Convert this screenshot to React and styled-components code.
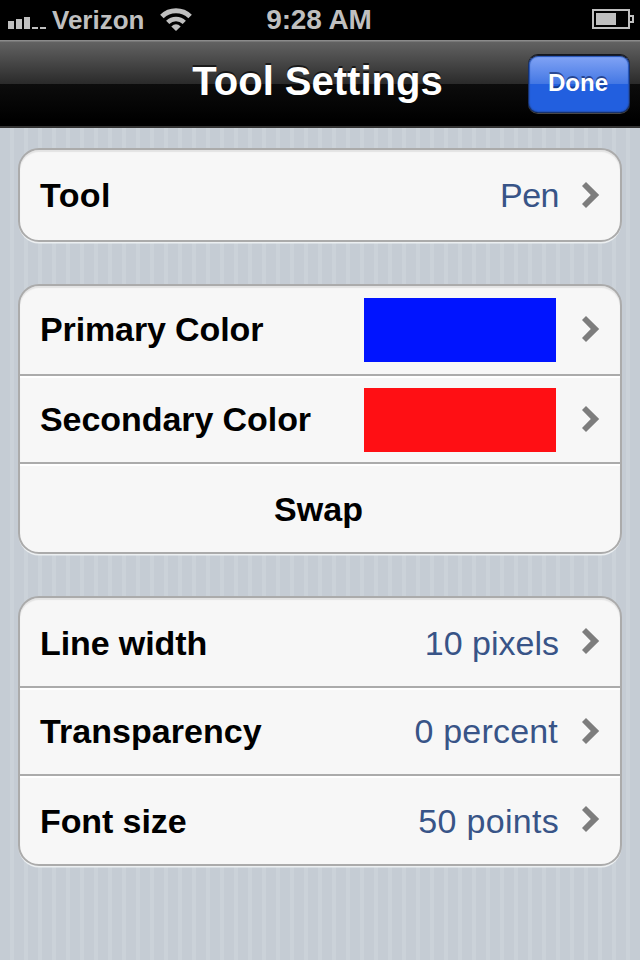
import React from "react";
import styled, { createGlobalStyle } from "styled-components";

const GlobalStyle = createGlobalStyle`
  *, *::before, *::after { box-sizing: border-box; }
  body { margin: 0; background: #c5ccd4; }
`;

const Screen = styled.div`
  width: 640px;
  height: 960px;
  overflow: hidden;
  display: flex;
  flex-direction: column;
  font-family: "Liberation Sans", Helvetica, Arial, sans-serif;
  background: repeating-linear-gradient(
    to right,
    #c5ccd4 0 10px,
    #cbd2d9 10px 14px
  );
`;

const StatusBar = styled.header`
  display: grid;
  grid-template-columns: 1fr auto 1fr;
  align-items: center;
  height: 40px;
  padding: 0 6px 0 8px;
  background: #000;
  color: #bfbfbf;
  font-weight: 700;
  font-size: 26px;
  line-height: 40px;
`;

const Carrier = styled.div`
  display: flex;
  height: 40px;
`;

const CarrierName = styled.span`
  width: 92px;
  margin: 0 16px 0 6px;
`;

const Clock = styled.time`
  height: 40px;
  margin-right: 4px;
  font-size: 28px;
  line-height: 40px;
  letter-spacing: -0.1px;
`;

const BatteryIcon = styled.svg`
  justify-self: end;
`;

const NavBar = styled.nav`
  display: grid;
  grid-template-columns: 102px 1fr 102px;
  align-items: start;
  height: 88px;
  padding: 0 10px;
  border-bottom: 2px solid #333;
  background: linear-gradient(
    #8b8b8b 0 1px,
    #626262 2px,
    #2a2a2a 44px,
    #0c0c0c 44px,
    #000 80px
  );
`;

const Title = styled.h1`
  grid-column: 2;
  margin: 0;
  padding: 1px 5px 0 0;
  text-align: center;
  color: #fff;
  font-size: 40px;
  line-height: 80px;
  white-space: nowrap;
  text-shadow: 0 -2px 0 rgba(0, 0, 0, 0.6);
`;

const DoneButton = styled.button`
  height: 58px;
  margin-top: 15px;
  padding: 0 2px 0 0;
  border: 1px solid #17326f;
  border-top-color: #151c30;
  border-radius: 10px;
  background: linear-gradient(#82a4f5, #4377e4 28px, #225fdf 28px, #225fdf);
  box-shadow: 0 -1px 0 #14161c, 0 1px 0 #484848, inset 0 0 1px 1px #2453b4;
  color: #fff;
  font: 700 24px/54px "Liberation Sans", Helvetica, Arial, sans-serif;
  text-shadow: 0 -2px 0 rgba(10, 30, 90, 0.6);

  span {
    display: block;
    height: 56px;
  }
`;

const Settings = styled.main`
  display: flex;
  flex-direction: column;
  gap: 42px;
  padding: 20px 18px;
`;

const Group = styled.section`
  border: 2px solid #ababab;
  border-radius: 21px;
  background: #f7f7f7;
  box-shadow: 0 2px 0 -0.5px #eceff1, inset 0 2px 1px #e3e3e3;
`;

const Row = styled.div`
  display: flex;
  align-items: center;
  justify-content: ${(p) => (p.$centered ? "center" : "flex-start")};
  box-sizing: content-box;
  height: ${(p) => p.$height}px;
  padding: 0 20px;

  &:not(:first-child) {
    border-top: 2px solid #ababab;
    box-shadow: inset 0 2px 0 #fff;
  }
`;

const Label = styled.span`
  flex: ${(p) => (p.$centered ? "none" : 1)};
  padding-top: ${(p) => Math.max(p.$drop || 0, 0)}px;
  padding-bottom: ${(p) => Math.max(-(p.$drop || 0), 0)}px;
  padding-right: ${(p) => (p.$centered ? 3 : 0)}px;
  color: #000;
  font-size: 34px;
  font-weight: 700;
  line-height: 40px;
  letter-spacing: ${(p) => p.$spacing || 0}px;
  white-space: nowrap;
`;

const Value = styled.span`
  padding-top: ${(p) => p.$drop || 0}px;
  margin-right: ${(p) => p.$gap || 23}px;
  color: #385487;
  font-size: 34px;
  line-height: 40px;
  letter-spacing: ${(p) => p.$spacing || 0}px;
  white-space: nowrap;
`;

const Swatch = styled.span`
  width: 192px;
  height: 64px;
  margin-right: 26px;
  margin-top: ${(p) => p.$drop || 0}px;
  background: ${(p) => p.$color};
`;

const ChevronIcon = styled.svg`
  flex: none;
  margin-bottom: ${(p) => p.$rise || 0}px;
`;

const Chevron = ({ rise }) => (
  <ChevronIcon $rise={rise} width="18" height="26" viewBox="0 0 18 26">
    <path d="M0 4 4 0 17.2 13 4 26 0 22 8.8 13z" fill="#7d7d7d" />
  </ChevronIcon>
);

const groups = [
  [{ label: "Tool", value: "Pen", height: 90, spacing: 0.4, valueSpacing: -0.5 }],
  [
    { label: "Primary Color", color: "#0014ff", height: 88, rise: 2, drop: -2, spacing: -0.12 },
    { label: "Secondary Color", color: "#ff0f14", height: 86, swatchDrop: 2, spacing: -0.07 },
    { label: "Swap", centered: true, height: 88, drop: 2, spacing: 0.1 },
  ],
  [
    { label: "Line width", value: "10 pixels", height: 88, rise: 2, drop: 2, spacing: -0.1 },
    { label: "Transparency", value: "0 percent", height: 86, spacing: 0.05, valueSpacing: 0.2, gap: 24 },
    { label: "Font size", value: "50 points", height: 88, rise: 2, drop: 2, spacing: -0.1, valueSpacing: 0.3 },
  ],
];

export default function App() {
  return (
    <Screen>
      <GlobalStyle />
      <StatusBar>
        <Carrier>
          <svg width="38" height="40" fill="#bfbfbf">
            <path d="M0 21h6v8H0zM8 19h6v10H8zM16 17h6v12h-6zM24 27h6v2h-6zM32 27h6v2h-6z" />
          </svg>
          <CarrierName>Verizon</CarrierName>
          <svg width="32" height="40" viewBox="0 0 32 40">
            <g fill="none" stroke="#bfbfbf">
              <path d="M1.9 16.5a20.2 20.2 0 0 1 28.2 0" strokeWidth="5" />
              <path d="M7.7 22.3a12 12 0 0 1 16.6 0" strokeWidth="4.6" />
            </g>
            <path d="M11.3 26.4q4.7-4.2 9.4 0L16 31z" fill="#bfbfbf" />
          </svg>
        </Carrier>
        <Clock>9:28 AM</Clock>
        <BatteryIcon width="42" height="40">
          <path d="M1 10h36v18H1zM38 16h3v6h-3" fill="none" stroke="#bfbfbf" strokeWidth="2" />
          <path d="M4 13h20v12H4z" fill="#bfbfbf" />
        </BatteryIcon>
      </StatusBar>
      <NavBar>
        <Title>Tool Settings</Title>
        <DoneButton>
          <span>Done</span>
        </DoneButton>
      </NavBar>
      <Settings>
        {groups.map((rows, i) => (
          <Group key={i}>
            {rows.map((r) => (
              <Row key={r.label} $height={r.height} $centered={r.centered}>
                <Label $centered={r.centered} $drop={r.drop} $spacing={r.spacing}>
                  {r.label}
                </Label>
                {r.value && (
                  <Value $drop={r.drop} $spacing={r.valueSpacing} $gap={r.gap}>
                    {r.value}
                  </Value>
                )}
                {r.color && <Swatch $color={r.color} $drop={r.swatchDrop} />}
                {!r.centered && <Chevron rise={r.rise} />}
              </Row>
            ))}
          </Group>
        ))}
      </Settings>
    </Screen>
  );
}
